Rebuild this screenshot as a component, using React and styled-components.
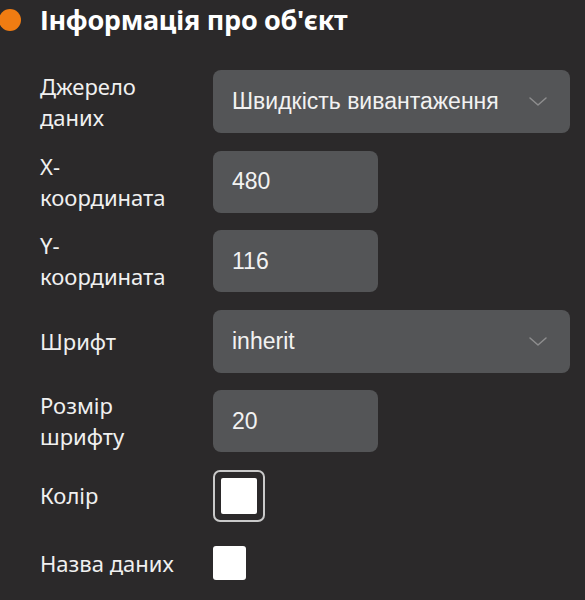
import React, { useState } from "react";
import styled, { createGlobalStyle } from "styled-components";

const GlobalStyle = createGlobalStyle`
  html, body {
    margin: 0;
    padding: 0;
    background: #2b292a;
  }
  body {
    font-family: "Noto Sans", "Open Sans", sans-serif;
    color: #f2f2f2;
  }
`;

const Panel = styled.div`
  width: 585px;
  height: 600px;
  box-sizing: border-box;
  background: #2b292a;
  overflow: hidden;
`;

const Header = styled.div`
  display: flex;
  align-items: center;
  gap: 19px;
  height: 40px;
`;

const Dot = styled.span`
  width: 22px;
  height: 22px;
  border-radius: 50%;
  background: #f07c12;
  flex-shrink: 0;
  margin-left: -1px;
`;

const Title = styled.h2`
  margin: 0;
  font-size: 27px;
  font-weight: 700;
  color: #ffffff;
  line-height: 40px;
  letter-spacing: -0.3px;
`;

const Form = styled.div`
  display: grid;
  grid-template-columns: 138px 1fr;
  column-gap: 35px;
  row-gap: 17.5px;
  padding: 30px 15px 0 40px;
  align-items: center;
`;

const Label = styled.div`
  font-size: 22px;
  line-height: 31px;
  color: #f0f0f0;
  margin-top: ${(p) => (p.last ? "7px" : "0")};
`;

const Field = styled.div`
  display: flex;
  margin-top: ${(p) => (p.last ? "7px" : "0")};
`;

const SelectBox = styled.div`
  display: flex;
  align-items: center;
  width: 100%;
  height: 63px;
  box-sizing: border-box;
  padding: 0 22px 0 19px;
  border-radius: 8px;
  background: #545557;
  font-family: "Liberation Sans", Arial, sans-serif;
  font-size: 23px;
  color: #f2f2f2;
  cursor: pointer;
`;

const SelectText = styled.span`
  flex: 1;
  white-space: nowrap;
`;

const Input = styled.input`
  width: 165px;
  height: 62px;
  box-sizing: border-box;
  padding: 0 19px;
  border: none;
  outline: none;
  border-radius: 8px;
  background: #545557;
  font-family: "Liberation Sans", Arial, sans-serif;
  font-size: 23px;
  color: #f2f2f2;
`;

const Swatch = styled.div`
  width: 52px;
  height: 52px;
  box-sizing: border-box;
  border: 2px solid #c9c9c9;
  border-radius: 7px;
  padding: 6px;
  display: flex;
`;

const SwatchFill = styled.div`
  flex: 1;
  border-radius: 2px;
  background: ${(p) => p.color};
`;

const Check = styled.div`
  width: 33px;
  height: 34px;
  border-radius: 3px;
  background: #ffffff;
`;

const Chevron = () => (
  <svg width="20" height="11" viewBox="0 0 20 11" fill="none">
    <path d="M2 2 L10 9 L18 2" stroke="#8e8e8f" strokeWidth="1.5" strokeLinecap="round" strokeLinejoin="round" />
  </svg>
);

const App = () => {
  const [x, setX] = useState("480");
  const [y, setY] = useState("116");
  const [size, setSize] = useState("20");

  return (
    <Panel>
      <GlobalStyle />
      <Header>
        <Dot />
        <Title>Інформація про об'єкт</Title>
      </Header>
      <Form>
        <Label>Джерело даних</Label>
        <Field>
          <SelectBox>
            <SelectText>Швидкість вивантаження</SelectText>
            <Chevron />
          </SelectBox>
        </Field>

        <Label>X-координата</Label>
        <Field>
          <Input value={x} onChange={(e) => setX(e.target.value)} />
        </Field>

        <Label>Y-координата</Label>
        <Field>
          <Input value={y} onChange={(e) => setY(e.target.value)} />
        </Field>

        <Label>Шрифт</Label>
        <Field>
          <SelectBox>
            <SelectText>inherit</SelectText>
            <Chevron />
          </SelectBox>
        </Field>

        <Label>Розмір шрифту</Label>
        <Field>
          <Input value={size} onChange={(e) => setSize(e.target.value)} />
        </Field>

        <Label>Колір</Label>
        <Field>
          <Swatch>
            <SwatchFill color="#ffffff" />
          </Swatch>
        </Field>

        <Label last>Назва даних</Label>
        <Field last>
          <Check />
        </Field>
      </Form>
    </Panel>
  );
};

export default App;
